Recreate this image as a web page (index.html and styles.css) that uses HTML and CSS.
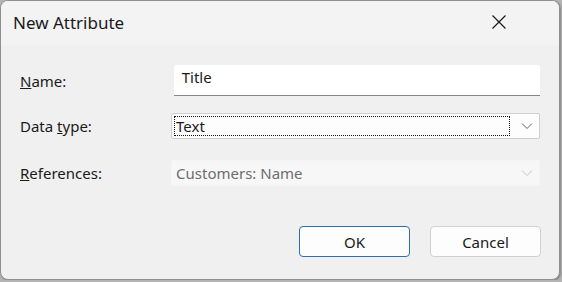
FILE: index.html
```html
<!DOCTYPE html>
<html lang="en">
<head>
    <meta charset="UTF-8">
    <title>New Attribute</title>
    <link rel="stylesheet" href="styles.css">
</head>
<body>
    <div class="dialog">
        <div class="title-bar">
            <span class="title">New Attribute</span>
            <span class="close">
                <svg width="16" height="16" viewBox="0 0 16 16">
                    <path d="M1.5 1.5 L14.5 14.5 M14.5 1.5 L1.5 14.5" stroke="#1a1a1a" stroke-width="1.2" fill="none"/>
                </svg>
            </span>
        </div>
        <div class="content">
            <div class="row">
                <label class="label"><u>N</u>ame:</label>
                <div class="textbox">Title</div>
            </div>
            <div class="row">
                <label class="label">Data <u>t</u>ype:</label>
                <div class="combo">
                    <span class="combo-text focused">Text</span>
                    <svg class="chevron" width="12" height="8" viewBox="0 0 12 8">
                        <path d="M1 1.5 L6 6.5 L11 1.5" stroke="#606060" stroke-width="1" fill="none"/>
                    </svg>
                </div>
            </div>
            <div class="row">
                <label class="label"><u>R</u>eferences:</label>
                <div class="combo disabled">
                    <span class="combo-text">Customers: Name</span>
                    <svg class="chevron" width="12" height="8" viewBox="0 0 12 8">
                        <path d="M1 1.5 L6 6.5 L11 1.5" stroke="#c4c4c4" stroke-width="1" fill="none"/>
                    </svg>
                </div>
            </div>
            <div class="buttons">
                <button class="btn default">OK</button>
                <button class="btn">Cancel</button>
            </div>
        </div>
    </div>
</body>
</html>
```

FILE: styles.css
```css
body {
    margin: 0;
    background-color: #b4b4b4;
    font-family: "Noto Sans", "Open Sans", sans-serif;
    font-size: 15px;
    color: #1a1a1a;
}

.dialog {
    width: 558px;
    height: 278px;
    border: 1px solid #8f8f8f;
    border-radius: 8px;
    background-color: #f0f0f0;
    overflow: hidden;
    box-shadow: 1px 1px 2px rgba(0, 0, 0, 0.25);
}

.title-bar {
    height: 44px;
    background-color: #f3f3f3;
    display: flex;
    align-items: center;
    justify-content: space-between;
    padding: 0 52px 0 12px;
}

.title {
    font-size: 17px;
    margin-top: -2px;
}

.close {
    display: flex;
    margin-top: -2px;
}

.content {
    padding: 20px 19px 0 19px;
}

.row {
    display: flex;
    align-items: center;
    height: 26px;
    margin-bottom: 21px;
}

.row:first-child {
    height: 31px;
    margin-bottom: 17px;
}

.label {
    width: 154px;
    color: #1a1a1a;
}

.textbox {
    width: 359px;
    height: 30px;
    background-color: #fff;
    border-bottom: 1px solid #868686;
    border-radius: 3px 3px 0 0;
    padding-left: 8px;
    line-height: 24px;
}

.combo {
    width: 366px;
    height: 24px;
    border: 1px solid #cfcfcf;
    border-radius: 2px;
    background-color: #fdfdfd;
    display: flex;
    align-items: center;
    justify-content: space-between;
    padding: 0 6px 0 2px;
}

.combo-text {
    height: 18px;
    line-height: 18px;
    width: 333px;
    padding-left: 1px;
    border: 1px dotted transparent;
}

.combo-text.focused {
    border-color: #111;
}

.combo.disabled {
    border-color: #f5f5f5;
    background-color: #f7f7f7;
    color: #6d6d6d;
}

.buttons {
    display: flex;
    justify-content: flex-end;
    gap: 20px;
    margin-top: 40px;
    margin-right: -1px;
}

.btn {
    width: 111px;
    height: 31px;
    font-family: "Noto Sans", "Open Sans", sans-serif;
    font-size: 15px;
    color: #1a1a1a;
    background-color: #fdfdfd;
    border: 1px solid #d0d0d0;
    border-radius: 4px;
}

.btn.default {
    border-color: #2d6fae;
}
```
